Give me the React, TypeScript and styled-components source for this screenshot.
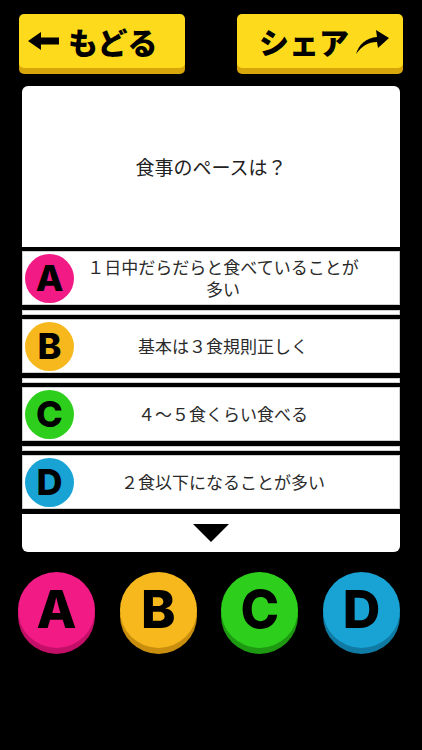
import React from "react";
import styled, { createGlobalStyle } from "styled-components";

const GlobalStyle = createGlobalStyle`
  html, body {
    margin: 0;
    padding: 0;
    background: #000;
  }
  body {
    font-family: "Noto Sans CJK JP", "Noto Sans", sans-serif;
  }
`;

const Screen = styled.div`
  width: 422px;
  height: 750px;
  background: #000;
  overflow: hidden;
`;

const Header = styled.div`
  display: flex;
  justify-content: space-between;
  padding: 14px 19px 0 19px;
`;

const YellowButton = styled.button<{ $pad: number; $gap: number }>`
  display: flex;
  align-items: center;
  gap: ${({ $gap }) => $gap}px;
  width: 166px;
  height: 54px;
  margin: 0 0 6px;
  padding: 0 0 0 ${({ $pad }) => $pad}px;
  border: none;
  border-radius: 5px;
  background: #fddb1c;
  box-shadow: 0 6px 0 #d6a60a;
  color: #000;
  font-family: "Noto Sans CJK JP", sans-serif;
  font-size: 30px;
  font-weight: 900;
  line-height: 1;
  letter-spacing: 0;
  cursor: pointer;
`;

const Card = styled.div`
  margin: 12px 22px 0;
  background: #fff;
  border-radius: 6px;
  overflow: hidden;
`;

const Question = styled.div`
  height: 161px;
  display: flex;
  align-items: center;
  justify-content: center;
  font-size: 19px;
  color: #222;
`;

const Divider = styled.div<{ $h: number }>`
  height: ${({ $h }) => $h}px;
  background: #000;
`;

const Strip = styled.div`
  height: 5px;
  background: #fff;
  box-shadow: inset 0 0 0 1px #cfcfcf;
`;

const Row = styled.div`
  height: 54px;
  display: flex;
  align-items: center;
  padding-left: 3px;
  background: #fff;
  box-shadow: inset 0 0 0 1px #cfcfcf;
`;

const Badge = styled.div<{ $color: string }>`
  flex: none;
  width: 49px;
  height: 49px;
  border-radius: 50%;
  background: ${({ $color }) => $color};
  display: flex;
  align-items: center;
  justify-content: center;
  font-family: Inter, "Liberation Sans", sans-serif;
  font-weight: 800;
  font-size: 36px;
  color: #000;
  line-height: 1;
`;

const Answer = styled.div`
  flex: 1;
  margin: 0 34px 0 6px;
  text-align: center;
  font-size: 17px;
  line-height: 22px;
  color: #2a2a2a;
`;

const More = styled.div`
  height: 38px;
  display: flex;
  align-items: center;
  justify-content: center;
`;

const Triangle = styled.div`
  width: 0;
  height: 0;
  border-left: 18px solid transparent;
  border-right: 18px solid transparent;
  border-top: 18px solid #000;
`;

const Buttons = styled.div`
  display: flex;
  justify-content: space-between;
  padding: 20px 22px 0 18px;
`;

const BigButton = styled.button<{ $color: string; $shade: string }>`
  width: 77px;
  height: 76px;
  padding: 0;
  border: none;
  border-radius: 50%;
  background: ${({ $color }) => $color};
  box-shadow: 0 6px 0 ${({ $shade }) => $shade};
  display: flex;
  align-items: center;
  justify-content: center;
  font-family: Inter, "Liberation Sans", sans-serif;
  font-weight: 800;
  font-size: 52px;
  line-height: 1;
  color: #000;
  cursor: pointer;
`;

const choices = [
  { key: "A", color: "#f21a85", shade: "#c30f67", text: "１日中だらだらと食べていることが多い" },
  { key: "B", color: "#f7b81e", shade: "#c98e0d", text: "基本は３食規則正しく" },
  { key: "C", color: "#2dcf1c", shade: "#1d9912", text: "４～５食くらい食べる" },
  { key: "D", color: "#19a3d5", shade: "#0f7aa3", text: "２食以下になることが多い" },
];

function BackArrow() {
  return (
    <svg width="31" height="18" viewBox="0 0 31 18">
      <path d="M0 9 L13 0 L13 5.5 L31 5.5 L31 12.5 L13 12.5 L13 18 Z" fill="#000" />
    </svg>
  );
}

function ShareArrow() {
  return (
    <svg width="34" height="28" viewBox="0 0 34 28">
      <path
        d="M1 27 C4 17 11 11 22 10 L21 3 L34 11 L23 21 L22 15 C13 15 7 19 1 27 Z"
        fill="#000"
      />
    </svg>
  );
}

export default function App() {
  return (
    <Screen>
      <GlobalStyle />
      <Header>
        <YellowButton $pad={9} $gap={9}>
          <BackArrow />
          もどる
        </YellowButton>
        <YellowButton $pad={22} $gap={6}>
          シェア
          <ShareArrow />
        </YellowButton>
      </Header>
      <Card>
        <Question>食事のペースは？</Question>
        {choices.map((c, i) => (
          <React.Fragment key={c.key}>
            <Divider $h={4} />
            <Row>
              <Badge $color={c.color}>{c.key}</Badge>
              <Answer>{c.text}</Answer>
            </Row>
            <Divider $h={5} />
            {i < choices.length - 1 && <Strip />}
          </React.Fragment>
        ))}
        <More>
          <Triangle />
        </More>
      </Card>
      <Buttons>
        {choices.map((c) => (
          <BigButton key={c.key} $color={c.color} $shade={c.shade}>
            {c.key}
          </BigButton>
        ))}
      </Buttons>
    </Screen>
  );
}
